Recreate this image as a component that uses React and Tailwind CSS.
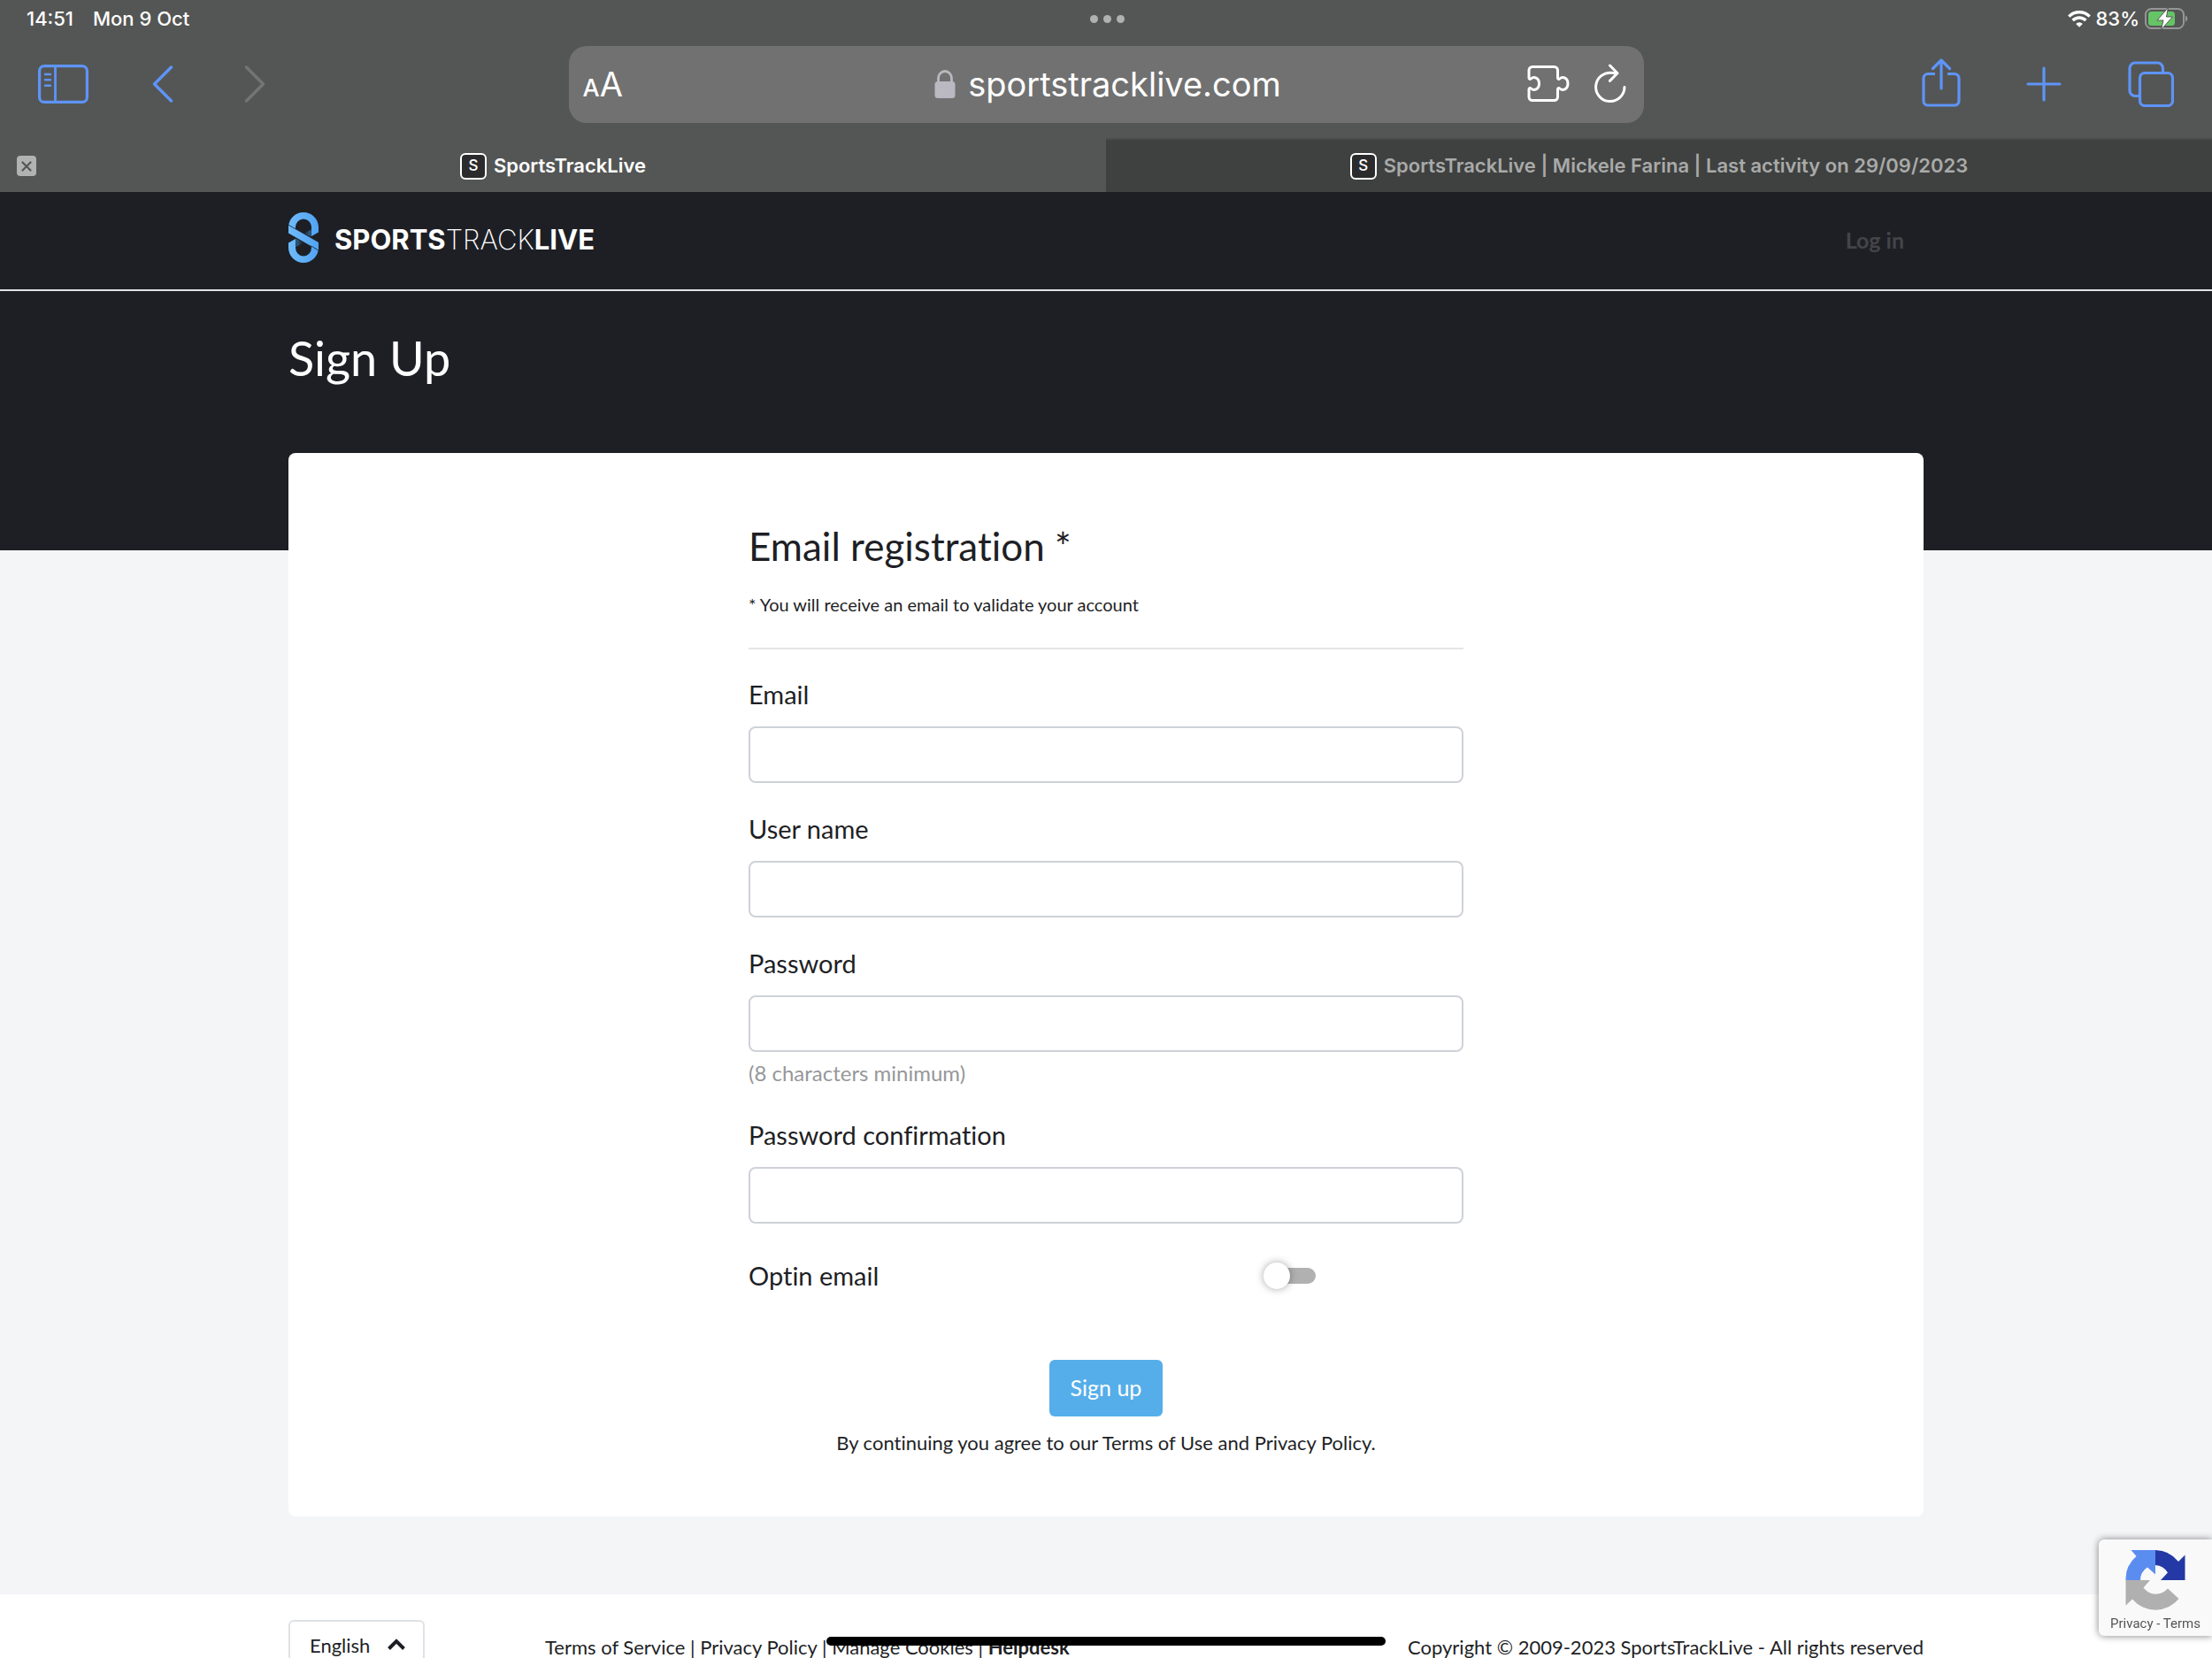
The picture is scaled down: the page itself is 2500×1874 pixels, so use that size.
import React from "react";

function StatusBar() {
  return (
    <div className="grid grid-cols-3 items-center h-11 pl-[30px] pr-[26px] pb-[2px] text-[22px] font-medium text-white">
      <div className="flex gap-[22px]">
        <span>14:51</span>
        <span>Mon 9 Oct</span>
      </div>
      <div className="flex justify-center gap-[6px]">
        <span className="size-[9px] rounded-full bg-[#b0b1b1]" />
        <span className="size-[9px] rounded-full bg-[#b0b1b1]" />
        <span className="size-[9px] rounded-full bg-[#b0b1b1]" />
      </div>
      <div className="flex items-center justify-end gap-[6px]">
        <svg className="w-[26px] h-[19px]" viewBox="0 0 26 19" fill="none" stroke="#fff" strokeWidth="3.4">
          <path d="M1.3 6.6a16.6 16.6 0 0 1 23.4 0" />
          <path d="M5.6 11a10.5 10.5 0 0 1 14.8 0" />
          <path d="M13 18.8l-3.8-3.9a5.4 5.4 0 0 1 7.6 0z" fill="#fff" stroke="none" />
        </svg>
        <span>83%</span>
        <svg className="w-[50px] h-[26px]" viewBox="0 0 50 26">
          <rect x="1" y="2" width="43" height="22" rx="6.5" fill="none" stroke="#959696" strokeWidth="2" />
          <rect x="4" y="5" width="30" height="16" rx="3.5" fill="#65c466" />
          <path d="M46 9.500c3 1 3 6 0 7z" fill="#959696" />
          <path d="M26.500 0.500L14 15h7L18.500 25.500 31.500 11h-7z" fill="#fff" stroke="#545655" strokeWidth="1" />
        </svg>
      </div>
    </div>
  );
}

function Toolbar() {
  return (
    <div className="grid grid-cols-[1fr_1215px_1fr] items-center h-28 pb-[10px]">
      <div className="flex items-center pl-[43px] text-[#5e94f8]">
        <button aria-label="Show sidebar">
          <svg className="w-[57px] h-11" viewBox="0 0 57 44" fill="none" stroke="currentColor" strokeWidth="3.200">
            <rect x="1.600" y="1.600" width="53.800" height="40.800" rx="5.500" />
            <path d="M19.500 2v40" strokeWidth="2.800" />
            <path d="M8 11h6M8 17.300h6M8 23.700h6" strokeWidth="2.400" strokeLinecap="round" />
          </svg>
        </button>
        <button aria-label="Back" className="ml-[72px]">
          <svg className="w-6 h-[42px]" viewBox="0 0 24 42" fill="none" stroke="currentColor" strokeWidth="3.400" strokeLinecap="round" strokeLinejoin="round">
            <path d="M21.500 2L2.500 21l19 19" />
          </svg>
        </button>
        <button aria-label="Forward" className="ml-[80px] text-[#737575]">
          <svg className="w-6 h-[42px]" viewBox="0 0 24 42" fill="none" stroke="currentColor" strokeWidth="3.400" strokeLinecap="round" strokeLinejoin="round">
            <path d="M2.500 2l19 19-19 19" />
          </svg>
        </button>
      </div>

      <div className="grid grid-cols-[1fr_auto_1fr] items-center h-[87px] rounded-[20px] bg-[#717171] pl-4 pr-5 text-white">
        <button aria-label="Page settings" className="flex items-baseline justify-self-start leading-none">
          <span className="text-[27px] font-medium">A</span>
          <span className="text-[38px]">A</span>
        </button>
        <div className="flex items-center gap-[14px] pl-2">
          <svg className="w-6 h-8" viewBox="0 0 24 32">
            <rect x="0.500" y="13" width="23" height="19" rx="3.500" fill="#bab9c1" />
            <path d="M4.500 14V9.500a7.500 8 0 0 1 15 0V14" fill="none" stroke="#bab9c1" strokeWidth="2.800" />
          </svg>
          <span className="text-[38px] leading-none">sportstracklive.com</span>
        </div>
        <div className="flex items-center justify-self-end gap-7">
          <button aria-label="Extensions">
            <svg className="w-[48px] h-[42px]" viewBox="0 0 48 42" fill="none" stroke="#fff" strokeWidth="3" strokeLinejoin="round">
              <path d="M6 1.500h24.500a4 4 0 0 1 4 4V14c0 1.600 1.300 1.900 2.300 1 3.300-3 9.200-1 9.200 5.500s-5.900 8.500-9.200 5.500c-1-.9-2.300-.6-2.300 1v8.500a4 4 0 0 1-4 4H6a4 4 0 0 1-4-4V27c0-1.600 1.300-1.900 2.300-1 3.300 3 9.200 1 9.200-5.500s-5.900-8.500-9.200-5.500c-1 .9-2.300.6-2.300-1V5.500a4 4 0 0 1 4-4z" />
            </svg>
          </button>
          <button aria-label="Reload">
            <svg className="w-9 h-[46px]" viewBox="0 0 36 46" fill="none" stroke="#fff" strokeWidth="3" strokeLinecap="round" strokeLinejoin="round">
              <path d="M24.500 10.800L20 10.300A16.200 16.200 0 1 0 34 26.500" />
              <path d="M17.500 2l8.500 8.700-8.500 8.700" />
            </svg>
          </button>
        </div>
      </div>

      <div className="flex items-center justify-end pr-[43px] text-[#5e94f8]">
        <button aria-label="Share">
          <svg className="w-11 h-[58px]" viewBox="0 0 44 58" fill="none" stroke="currentColor" strokeWidth="3.200" strokeLinecap="round" strokeLinejoin="round">
            <path d="M15 17.500H7a5 5 0 0 0-5 5V48a5 5 0 0 0 5 5h30a5 5 0 0 0 5-5V22.500a5 5 0 0 0-5-5h-8" strokeLinecap="butt" />
            <path d="M22 34V3M12.500 11.500L22 2l9.500 9.500" />
          </svg>
        </button>
        <button aria-label="New tab" className="ml-[74px]">
          <svg className="size-10" viewBox="0 0 40 40" fill="none" stroke="currentColor" strokeWidth="3.200" strokeLinecap="round">
            <path d="M20 2v36M2 20h36" />
          </svg>
        </button>
        <button aria-label="Show tabs" className="ml-[75px]">
          <svg className="w-[52px] h-[52px]" viewBox="0 0 52 52" fill="none" stroke="currentColor" strokeWidth="3.200">
            <path d="M13 39.500H8a6 6 0 0 1-6-6V8a6 6 0 0 1 6-6h25.500a6 6 0 0 1 6 6v5" />
            <rect x="13.500" y="13.500" width="37" height="37" rx="5.500" />
          </svg>
        </button>
      </div>
    </div>
  );
}

function Favicon() {
  return (
    <span className="flex items-center justify-center size-[30px] rounded-md border-2 border-white bg-[#2b2b2d] text-[17px] font-medium leading-none text-white">
      S
    </span>
  );
}

function TabBar() {
  return (
    <div className="grid grid-cols-2 h-[61px] text-[22px] font-semibold">
      <div className="grid grid-cols-[1fr_auto_1fr] items-center px-[19px] pt-[2px] text-white">
        <button aria-label="Close tab" className="flex items-center justify-center w-[22px] h-[23px] rounded bg-[#b1b2b2]">
          <svg className="size-3" viewBox="0 0 12 12" stroke="#545655" strokeWidth="2.200" strokeLinecap="round">
            <path d="M1.500 1.500l9 9M10.500 1.500l-9 9" />
          </svg>
        </button>
        <a href="#" className="flex items-center gap-2">
          <Favicon />
          SportsTrackLive
        </a>
      </div>
      <a href="#" className="flex items-center justify-center gap-2 border-t-2 border-[#4a4b4a] bg-[#3f4140] text-[#a9aaa9]">
        <Favicon />
        SportsTrackLive | Mickele Farina | Last activity on 29/09/2023
      </a>
    </div>
  );
}

function Logo() {
  return (
    <a href="#" className="flex items-center gap-[18px] pb-2 text-white" aria-label="SportsTrackLive">
      <svg className="w-[34px] h-[57px]" viewBox="0 0 34 57">
        <defs>
          <linearGradient id="logoBlue" x1="0" y1="0" x2="1" y2="0">
            <stop offset="0" stopColor="#70bbfa" />
            <stop offset="1" stopColor="#50a3f3" />
          </linearGradient>
          <linearGradient id="shadeR" x1="1" y1="0" x2="0" y2="0">
            <stop offset="0" stopColor="#2f628f" />
            <stop offset="1" stopColor="#1e1f25" />
          </linearGradient>
          <linearGradient id="shadeL" x1="0" y1="0" x2="1" y2="0">
            <stop offset="0" stopColor="#2f628f" />
            <stop offset="1" stopColor="#1e1f25" />
          </linearGradient>
        </defs>
        <path d="M17 24l8.500-4.500v8z" fill="url(#shadeR)" />
        <path d="M17 34.500l-8.500-5v9.500z" fill="url(#shadeL)" />
        <path d="M0 17A17 17 0 0 1 34 17V22.500L26 27V17a9 9.500 0 0 0-18 0v2z" fill="url(#logoBlue)" />
        <path d="M34 40A17 17 0 0 1 0 40V34.500L8 30V40a9 9.500 0 0 0 18 0v-2z" fill="url(#logoBlue)" />
        <path d="M0 14.600L34 34V43L0 23.500z" fill="url(#logoBlue)" />
        <path d="M0 14.300L8.500 19M34 43L25.500 38" stroke="#1e3d5c" strokeWidth="1" />
      </svg>
      <span className="pt-1 font-[Inter] text-[31px] leading-none">
        <span className="font-bold">SPORTS</span>
        <span className="font-extralight">TRACK</span>
        <span className="font-bold">LIVE</span>
      </span>
    </a>
  );
}

function Field({ id, label, type, hint }) {
  return (
    <div className="flex flex-col">
      <label htmlFor={id} className="text-[29px] leading-[45px]">
        {label}
      </label>
      <input
        id={id}
        type={type}
        className="mt-[14px] h-16 w-full rounded-lg border-2 border-[#ced2d8] bg-white px-5 text-[26px]"
      />
      {hint && <p className="mt-[6px] text-[24px] leading-9 text-[#96979a]">{hint}</p>}
    </div>
  );
}

function SignUpForm() {
  return (
    <form className="mx-auto flex w-[808px] flex-col" onSubmit={(e) => e.preventDefault()}>
      <h2 className="text-[44px] leading-[54px]">Email registration *</h2>
      <p className="mt-[23px] text-[20px] leading-8">* You will receive an email to validate your account</p>
      <hr className="mt-[33px] border-t-2 border-[#e4e5e7]" />
      <div className="mt-7 flex flex-col gap-[29px]">
        <Field id="email" label="Email" type="email" />
        <Field id="username" label="User name" type="text" />
        <Field id="password" label="Password" type="password" hint="(8 characters minimum)" />
        <Field id="confirmation" label="Password confirmation" type="password" />
      </div>
      <div className="mt-9 grid grid-cols-[582px_1fr] items-center">
        <label htmlFor="optin" className="text-[29px] leading-[45px]">
          Optin email
        </label>
        <input
          id="optin"
          type="checkbox"
          className="relative ml-[2px] h-[18px] w-[57px] appearance-none rounded-full bg-[#b1b1b1] before:absolute before:-left-[2px] before:-top-[6px] before:size-[30px] before:rounded-full before:bg-white before:shadow-[0_0_10px_rgba(0,0,0,0.35)] checked:bg-[#55aeea] checked:before:left-[27px]"
        />
      </div>
      <button type="submit" className="mt-[73px] h-16 w-32 self-center rounded-md bg-[#55aeea] text-[25px] text-white">
        Sign up
      </button>
      <p className="mt-[14px] text-center text-[22px] leading-8">
        By continuing you agree to our <a href="#">Terms of Use</a> and <a href="#">Privacy Policy</a>.
      </p>
    </form>
  );
}

function Footer() {
  return (
    <footer className="shrink-0 bg-white pt-[29px]">
      <div className="mx-auto flex h-[60px] max-w-[1848px] items-center text-[22px]">
        <div className="relative w-[154px]">
          <select aria-label="Language" className="h-[60px] w-full appearance-none rounded-md border-2 border-[#dee2e6] bg-white pb-1 pl-[22px]">
            <option>English</option>
          </select>
          <svg className="pointer-events-none absolute right-[22px] top-[21px] h-[13px] w-5" viewBox="0 0 20 13" fill="none" stroke="#1e1f25" strokeWidth="4">
            <path d="M1.500 11.500L10 3l8.500 8.500" />
          </svg>
        </div>
        <nav className="ml-[136px]">
          <a href="#">Terms of Service</a> | <a href="#">Privacy Policy</a> | <a href="#">Manage Cookies</a> |{" "}
          <a href="#" className="font-bold">
            Helpdesk
          </a>
        </nav>
        <p className="ml-auto">Copyright © 2009-2023 SportsTrackLive - All rights reserved</p>
      </div>
    </footer>
  );
}

function RecaptchaBadge() {
  return (
    <aside className="fixed bottom-[25px] right-0 flex w-32 flex-col items-center rounded-l-md bg-[#f9f9f9] pt-3 pb-[2px] shadow-[0_0_8px_#808080]">
      <svg className="h-[69px] w-[68px]" viewBox="0 0 68 69">
        <path d="M34 0A34 34 0 0 1 60 13L67.500 5.500V34H40L48 25.500A18 17 0 0 0 34 17z" fill="#2439a5" />
        <path d="M34 0V27.500L25 19.500A17.500 17.500 0 0 0 17 34H0.500A34 34 0 0 1 12.500 7L6.500 0z" fill="#5b8df0" />
        <path d="M0.500 34H28L20.500 42.500A17.500 17.500 0 0 0 48 43.500L60.500 55A34 34 0 0 1 8 55.500L0.500 62.500z" fill="#b0b0b0" />
      </svg>
      <p className="mt-[2px] font-[Roboto] text-[15px] leading-6 text-[#555]">
        <a href="#">Privacy</a> - <a href="#">Terms</a>
      </p>
    </aside>
  );
}

export default function App() {
  return (
    <div className="flex h-screen flex-col overflow-hidden bg-[#f4f5f7]">
      <div className="shrink-0 bg-[#545655] font-[Inter,sans-serif]">
        <StatusBar />
        <Toolbar />
        <TabBar />
      </div>

      <div className="flex min-h-0 flex-1 flex-col overflow-hidden font-[Lato,sans-serif] text-[#1e1f25] [font-variant-ligatures:none]">
        <div className="shrink-0 bg-[#1e1f25] text-white">
          <header className="border-b-2 border-[#e0e2e4]">
            <div className="mx-auto flex h-[110px] max-w-[1848px] items-center justify-between pr-[22px]">
              <Logo />
              <a href="#" className="text-[25px] font-bold text-[#434449]">
                Log in
              </a>
            </div>
          </header>
          <div className="mx-auto h-[293px] max-w-[1848px] pt-[42px]">
            <h1 className="text-[54px] leading-[68px]">Sign Up</h1>
          </div>
        </div>
        <main className="z-10 mx-auto -mt-[110px] mb-[88px] w-full max-w-[1848px] shrink-0 rounded-lg bg-white pt-[78px] pb-[67px]">
          <SignUpForm />
        </main>
        <Footer />
      </div>

      <RecaptchaBadge />
      <div className="fixed bottom-[14px] left-1/2 z-20 h-[10px] w-[632px] -translate-x-1/2 rounded-full bg-black" />
    </div>
  );
}
